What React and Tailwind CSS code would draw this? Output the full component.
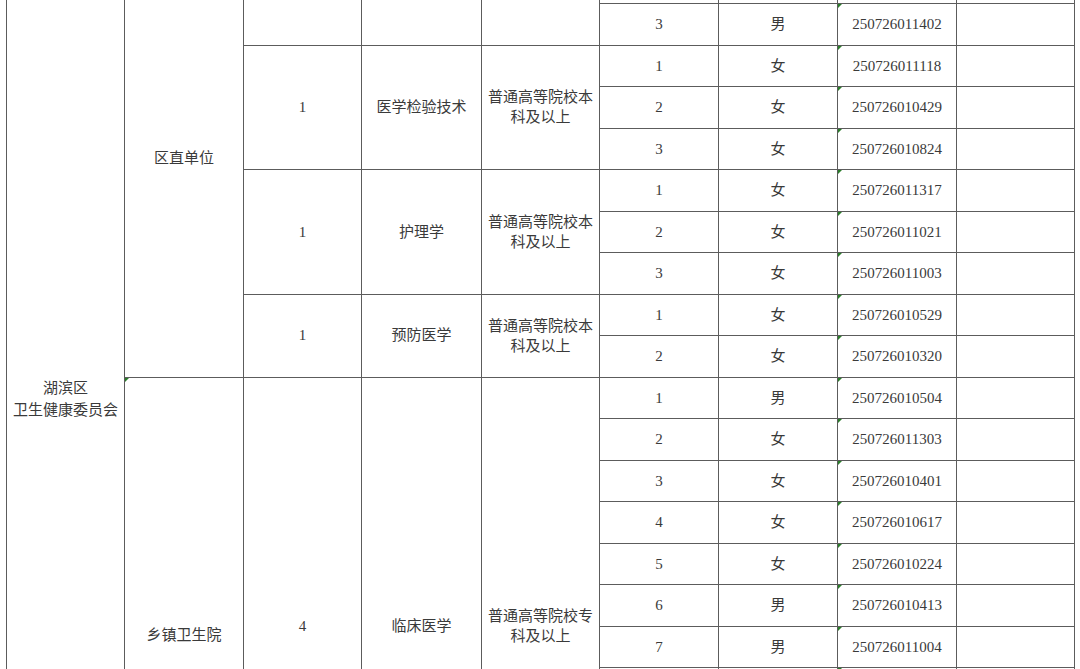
import React from 'react';

const SPAN = {
    1: '',
    2: 'row-span-2',
    3: 'row-span-3',
    8: 'row-span-8',
    10: 'row-span-10',
    18: 'row-span-18',
};

const groups = [
    { span: 2, count: '', major: '', edu: '', rows: [['', '', ''], ['3', '男', '250726011402']] },
    {
        span: 3,
        count: '1',
        major: '医学检验技术',
        edu: ['普通高等院校本', '科及以上'],
        rows: [
            ['1', '女', '250726011118'],
            ['2', '女', '250726010429'],
            ['3', '女', '250726010824'],
        ],
    },
    {
        span: 3,
        count: '1',
        major: '护理学',
        edu: ['普通高等院校本', '科及以上'],
        rows: [
            ['1', '女', '250726011317'],
            ['2', '女', '250726011021'],
            ['3', '女', '250726011003'],
        ],
    },
    {
        span: 2,
        count: '1',
        major: '预防医学',
        edu: ['普通高等院校本', '科及以上'],
        rows: [
            ['1', '女', '250726010529'],
            ['2', '女', '250726010320'],
        ],
    },
    {
        span: 8,
        count: '4',
        major: '临床医学',
        edu: ['普通高等院校专', '科及以上'],
        pad: true,
        rows: [
            ['1', '男', '250726010504'],
            ['2', '女', '250726011303'],
            ['3', '女', '250726010401'],
            ['4', '女', '250726010617'],
            ['5', '女', '250726010224'],
            ['6', '男', '250726010413'],
            ['7', '男', '250726011004'],
            ['', '', ''],
        ],
    },
];

const Mark = () => (
    <span className="absolute top-0 left-0 w-0 h-0 border-t-[4px] border-r-[4px] border-t-[#2a7d2a] border-r-transparent" />
);

const Cell = ({ span = 1, className = '', children }) => (
    <div className={`relative bg-white flex items-center justify-center text-center ${SPAN[span]} ${className}`}>
        {children}
    </div>
);

export default function App() {
    const cells = [];

    // first column and the upper unit cell start on row one
    cells.push(
        <Cell key="dept" span={18} className="items-start pt-[377px] leading-[22px]">
            <div>
                湖滨区
                <br />
                卫生健康委员会
            </div>
        </Cell>
    );
    cells.push(
        <Cell key="unit1" span={10} className="pb-[60px]">
            区直单位
        </Cell>
    );

    let rowNo = 1;
    groups.forEach((g, gi) => {
        g.rows.forEach((r, ri) => {
            if (ri === 0) {
                if (gi === groups.length - 1) {
                    cells.push(
                        <Cell key="unit2" span={8} className="pt-[224px]">
                            <Mark />
                            乡镇卫生院
                        </Cell>
                    );
                }
                const pad = g.pad ? 'pt-[206px]' : '';
                cells.push(
                    <Cell key={`c-${gi}`} span={g.span} className={pad}>
                        {g.count}
                    </Cell>
                );
                cells.push(
                    <Cell key={`m-${gi}`} span={g.span} className={pad}>
                        {g.major}
                    </Cell>
                );
                cells.push(
                    <Cell key={`e-${gi}`} span={g.span} className={`leading-[20px] ${pad}`}>
                        {g.edu ? (
                            <div>
                                {g.edu[0]}
                                <br />
                                {g.edu[1]}
                            </div>
                        ) : null}
                    </Cell>
                );
            }
            cells.push(<Cell key={`n-${rowNo}`}>{r[0]}</Cell>);
            cells.push(<Cell key={`s-${rowNo}`}>{r[1]}</Cell>);
            cells.push(
                <Cell key={`i-${rowNo}`}>
                    {rowNo > 1 && <Mark />}
                    {r[2]}
                </Cell>
            );
            cells.push(<Cell key={`x-${rowNo}`} />);
            rowNo += 1;
        });
    });

    return (
        <div
            className="w-[1080px] h-[669px] bg-white overflow-hidden text-[15px] text-[#3a3a3a]"
            style={{ fontFamily: '"Liberation Serif", "Noto Sans CJK SC", serif' }}
        >
            <div className="ml-[6px] w-fit h-full px-px bg-[#5c5c5c] grid gap-px grid-cols-[117px_118px_117px_119px_117px_118px_118px_118px_117px] grid-rows-[3px_repeat(16,40.5px)_1fr]">
                {cells}
            </div>
        </div>
    );
}
